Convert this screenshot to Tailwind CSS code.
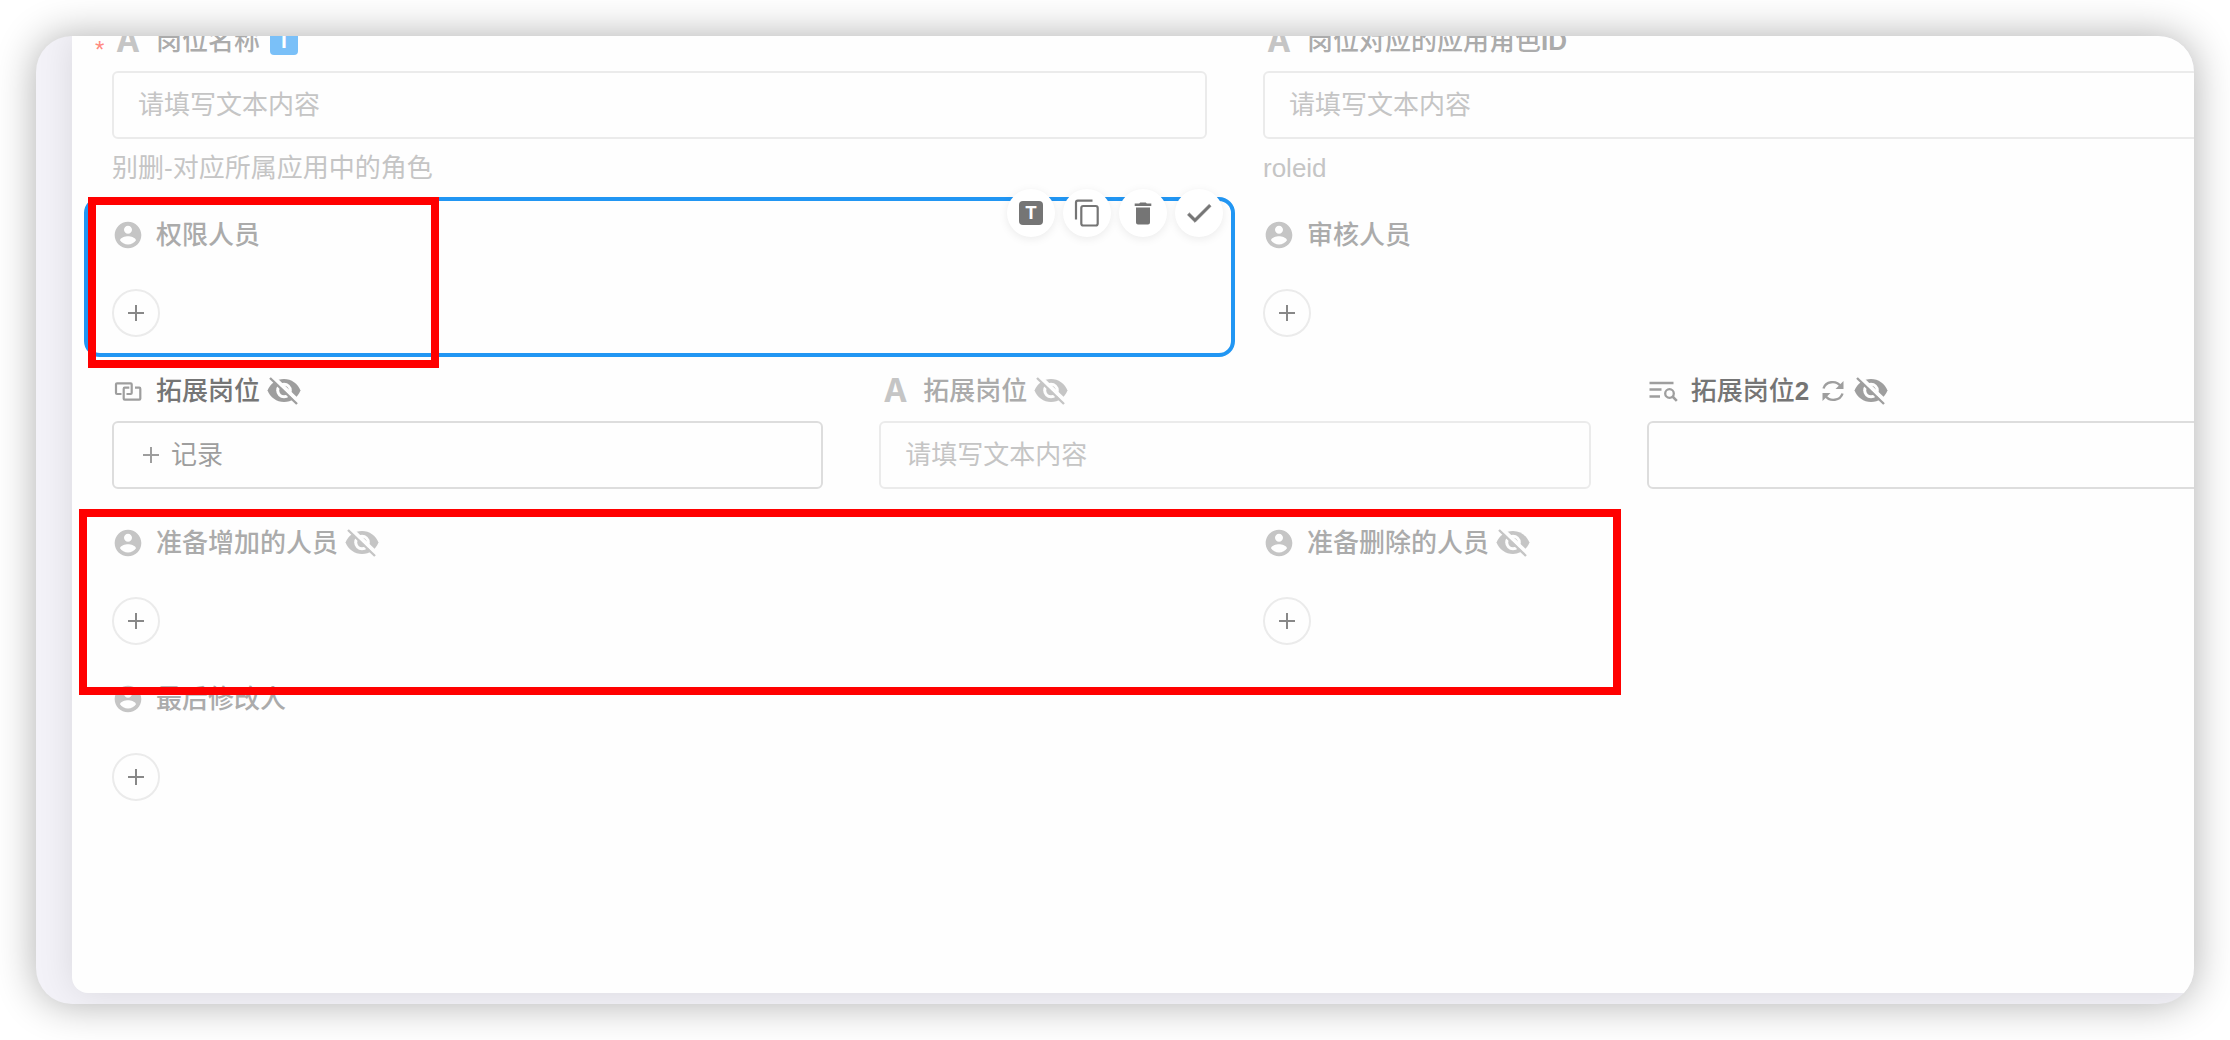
<!DOCTYPE html>
<html lang="zh-CN">
<head>
  <meta charset="UTF-8">
  <title>岗位表单</title>
  <meta name="viewport" content="width=device-width, initial-scale=1.0">
  <script src="https://cdn.jsdelivr.net/npm/@tailwindcss/browser@4"></script>
</head>
<body class="bg-white font-['Liberation_Sans','Noto_Sans_CJK_SC',sans-serif] text-[26px] leading-[36px]">

  <!-- icons -->
  <svg class="absolute size-0" aria-hidden="true">
    <symbol id="i-user" viewBox="0 0 24 24">
      <path d="M12 2C6.480 2 2 6.480 2 12s4.480 10 10 10 10-4.480 10-10S17.520 2 12 2zm0 3c1.660 0 3 1.340 3 3s-1.340 3-3 3-3-1.340-3-3 1.340-3 3-3zm0 14.200c-2.500 0-4.710-1.280-6-3.220.030-1.990 4-3.080 6-3.080 1.990 0 5.970 1.090 6 3.080-1.290 1.940-3.500 3.220-6 3.220z"/>
    </symbol>
    <mask id="m-hidden" maskUnits="userSpaceOnUse" x="0" y="0" width="36" height="36">
      <rect width="36" height="36" fill="#fff"/>
      <circle cx="18" cy="17.500" r="7.800" fill="#000"/>
      <circle cx="18" cy="17.500" r="4.800" fill="#fff"/>
      <path d="M18 15a3 3 0 0 1 3 3" fill="none" stroke="#000" stroke-width="1.200"/>
      <path d="M5 2 33 29" stroke="#000" stroke-width="4"/>
    </mask>
    <symbol id="i-hidden" viewBox="0 0 36 36">
      <path mask="url(#m-hidden)" d="M18 6C10.500 6 4.300 10.700 1.500 17.500 4.300 24.300 10.500 29 18 29s13.700-4.700 16.500-11.500C31.700 10.700 25.500 6 18 6z"/>
      <path d="M4 5 31 31" fill="none" stroke="currentColor" stroke-width="2.400"/>
    </symbol>
    <symbol id="i-plus" viewBox="0 0 16 16">
      <path d="M8 0v16M0 8h16" fill="none" stroke="currentColor" stroke-width="2"/>
    </symbol>
    <symbol id="i-relation" viewBox="0 0 32 32">
      <path d="M9.500 19H5a1 1 0 0 1-1-1V9.300a1 1 0 0 1 1-1h13.700a1 1 0 0 1 1 1V18a1 1 0 0 1-1 1H14.500M17.300 12.700h-4.600a1 1 0 0 0-1 1v10a1 1 0 0 0 1 1h14.600a1 1 0 0 0 1-1v-10a1 1 0 0 0-1-1H23" fill="none" stroke="currentColor" stroke-width="2.200"/>
    </symbol>
    <symbol id="i-lookup" viewBox="0 0 32 32">
      <path d="M2.500 8h24M2.500 14.500h12M2.500 21.500h10.500" fill="none" stroke="currentColor" stroke-width="2.400"/>
      <circle cx="22.500" cy="18.500" r="4.300" fill="none" stroke="currentColor" stroke-width="2.300"/>
      <path d="m25.500 21.500 4.300 4.300" fill="none" stroke="currentColor" stroke-width="2.600"/>
    </symbol>
    <symbol id="i-sync" viewBox="0 0 24 24">
      <path d="M2.500 9.500C4.500 2.500 15 .5 20 7.500M21.500 14.500C19.500 21.500 9 23.500 4 16.500" fill="none" stroke="currentColor" stroke-width="2.400"/>
      <path d="M22.500 2v8h-8zM1.500 22v-8h8z"/>
    </symbol>
    <symbol id="i-copy" viewBox="0 0 28 28">
      <path d="M3 20.500V3.500A1.800 1.800 0 0 1 4.800 1.700H19.500" fill="none" stroke="currentColor" stroke-width="2.200"/>
      <rect x="8.300" y="7" width="16.400" height="19.500" rx="2" fill="none" stroke="currentColor" stroke-width="2.200"/>
    </symbol>
    <symbol id="i-trash" viewBox="0 0 28 28">
      <path d="M7 8.500h14V23.500a2 2 0 0 1-2 2H9a2 2 0 0 1-2-2zM5.700 4.500h4.500l1-1h5.600l1 1h4.500v2.400H5.700z"/>
    </symbol>
    <symbol id="i-check" viewBox="0 0 24 24">
      <path d="M9 16.170 4.830 12l-1.420 1.410L9 19 21 7l-1.410-1.410z" stroke="currentColor" stroke-width=".6"/>
    </symbol>
  </svg>

  <main class="flex min-h-screen p-9">
    <div class="flex flex-1 overflow-hidden rounded-[36px] bg-[#f3f2f8] pb-[11px] pl-9 shadow-[0_0_40px_rgba(0,0,0,0.32)]">
      <div class="flex-1 rounded-bl-2xl bg-[#fefefe] shadow-[0_0_36px_rgba(0,0,0,0.11)]">

        <form class="relative -mt-[31px] -mr-[190px] ml-[14px] grid grid-cols-6 gap-x-1">

          <!-- row 1 -->
          <div class="relative col-span-3 px-[26px] py-[18px]">
            <span class="absolute top-[29px] left-[9px] text-2xl text-[#ff8a80]">*</span>
            <div class="flex h-9 items-center text-[#ababab]">
              <span class="mr-3 w-8 text-center font-['Inter',sans-serif] text-[32px] font-bold text-[#c5c5c5]">A</span>
              <label for="post-name" class="font-medium">岗位名称</label>
              <span class="ml-2.5 flex size-7 items-center justify-center rounded bg-[#7ac0f8] font-['Inter',sans-serif] text-xl font-bold text-white">T</span>
            </div>
            <input id="post-name" type="text" placeholder="请填写文本内容" class="mt-3 h-[68px] w-full rounded-md border-2 border-[#ebebeb] px-6 placeholder:text-[#c5c5c5]">
            <p class="mt-4 leading-[26px] text-[#c5c5c5]">别删-对应所属应用中的角色</p>
          </div>
          <div class="col-span-3 px-[26px] py-[18px]">
            <div class="flex h-9 items-center text-[#ababab]">
              <span class="mr-3 w-8 text-center font-['Inter',sans-serif] text-[32px] font-bold text-[#c5c5c5]">A</span>
              <label for="role-id" class="font-medium">岗位对应的应用角色<b>ID</b></label>
            </div>
            <input id="role-id" type="text" placeholder="请填写文本内容" class="mt-3 h-[68px] w-full rounded-md border-2 border-[#ebebeb] px-6 placeholder:text-[#c5c5c5]">
            <p class="mt-4 leading-[26px] text-[#c5c5c5]">roleid</p>
          </div>

          <!-- row 2, first field is selected -->
          <div class="relative col-span-3 rounded-[14px] px-[26px] py-[18px] outline-4 -outline-offset-2 outline-[#2196f3]">
            <div class="flex h-9 items-center text-[#ababab]">
              <svg class="mr-3 size-8 fill-[#c5c5c5]"><use href="#i-user"/></svg>
              <span id="l-auth" class="font-medium">权限人员</span>
            </div>
            <button type="button" aria-labelledby="l-auth" class="mt-9 flex size-12 items-center justify-center rounded-full border-2 border-[#ebebeb] text-[#888]">
              <svg class="size-4"><use href="#i-plus"/></svg>
            </button>
            <div class="absolute -top-2.5 right-2.5 flex gap-2 text-[#757575]">
              <button type="button" aria-label="标题" class="flex size-12 items-center justify-center rounded-full bg-white shadow-[0_2px_10px_rgba(0,0,0,0.08)]">
                <span class="flex size-6 items-center justify-center rounded bg-[#757575] font-['Inter',sans-serif] text-lg font-bold text-white">T</span>
              </button>
              <button type="button" aria-label="复制" class="flex size-12 items-center justify-center rounded-full bg-white shadow-[0_2px_10px_rgba(0,0,0,0.08)]">
                <svg class="size-7"><use href="#i-copy"/></svg>
              </button>
              <button type="button" aria-label="删除" class="flex size-12 items-center justify-center rounded-full bg-white shadow-[0_2px_10px_rgba(0,0,0,0.08)]">
                <svg class="size-7 fill-current"><use href="#i-trash"/></svg>
              </button>
              <button type="button" aria-label="确定" class="flex size-12 items-center justify-center rounded-full bg-white shadow-[0_2px_10px_rgba(0,0,0,0.08)]">
                <svg class="size-8 fill-current"><use href="#i-check"/></svg>
              </button>
            </div>
          </div>
          <div class="col-span-3 px-[26px] py-[18px]">
            <div class="flex h-9 items-center text-[#ababab]">
              <svg class="mr-3 size-8 fill-[#c5c5c5]"><use href="#i-user"/></svg>
              <span id="l-audit" class="font-medium">审核人员</span>
            </div>
            <button type="button" aria-labelledby="l-audit" class="mt-9 flex size-12 items-center justify-center rounded-full border-2 border-[#ebebeb] text-[#888]">
              <svg class="size-4"><use href="#i-plus"/></svg>
            </button>
          </div>

          <!-- row 3 -->
          <div class="col-span-2 px-[26px] py-[18px]">
            <div class="flex h-9 items-center text-[#757575]">
              <svg class="mr-3 size-8 text-[#9e9e9e]"><use href="#i-relation"/></svg>
              <span class="font-medium">拓展岗位</span>
              <svg class="ml-1.5 size-9 fill-current text-[#9e9e9e]"><use href="#i-hidden"/></svg>
            </div>
            <button type="button" class="mt-3 flex h-[68px] w-full items-center gap-3 rounded-md border-2 border-[#ddd] px-[29px] text-[#9e9e9e]">
              <svg class="size-4"><use href="#i-plus"/></svg>
              记录
            </button>
          </div>
          <div class="col-span-2 px-[26px] py-[18px]">
            <div class="flex h-9 items-center text-[#ababab]">
              <span class="mr-3 w-8 text-center font-['Inter',sans-serif] text-[32px] font-bold text-[#c5c5c5]">A</span>
              <label for="post-ext" class="font-medium">拓展岗位</label>
              <svg class="ml-1.5 size-9 fill-current text-[#c5c5c5]"><use href="#i-hidden"/></svg>
            </div>
            <input id="post-ext" type="text" placeholder="请填写文本内容" class="mt-3 h-[68px] w-full rounded-md border-2 border-[#ebebeb] px-6 placeholder:text-[#c5c5c5]">
          </div>
          <div class="col-span-2 px-[26px] py-[18px]">
            <div class="flex h-9 items-center text-[#757575]">
              <svg class="mr-3 size-8 text-[#9e9e9e]"><use href="#i-lookup"/></svg>
              <label for="post-ext2" class="font-medium">拓展岗位<b>2</b></label>
              <svg class="ml-3 size-6 fill-current text-[#9e9e9e]"><use href="#i-sync"/></svg>
              <svg class="ml-2 size-9 fill-current text-[#9e9e9e]"><use href="#i-hidden"/></svg>
            </div>
            <input id="post-ext2" type="text" class="mt-3 h-[68px] w-full rounded-md border-2 border-[#ddd] px-6">
          </div>

          <!-- row 4 -->
          <div class="col-span-3 px-[26px] py-[18px]">
            <div class="flex h-9 items-center text-[#ababab]">
              <svg class="mr-3 size-8 fill-[#c5c5c5]"><use href="#i-user"/></svg>
              <span id="l-add" class="font-medium">准备增加的人员</span>
              <svg class="ml-1.5 size-9 fill-current text-[#c5c5c5]"><use href="#i-hidden"/></svg>
            </div>
            <button type="button" aria-labelledby="l-add" class="mt-9 flex size-12 items-center justify-center rounded-full border-2 border-[#ebebeb] text-[#888]">
              <svg class="size-4"><use href="#i-plus"/></svg>
            </button>
          </div>
          <div class="col-span-3 px-[26px] py-[18px]">
            <div class="flex h-9 items-center text-[#ababab]">
              <svg class="mr-3 size-8 fill-[#c5c5c5]"><use href="#i-user"/></svg>
              <span id="l-del" class="font-medium">准备删除的人员</span>
              <svg class="ml-1.5 size-9 fill-current text-[#c5c5c5]"><use href="#i-hidden"/></svg>
            </div>
            <button type="button" aria-labelledby="l-del" class="mt-9 flex size-12 items-center justify-center rounded-full border-2 border-[#ebebeb] text-[#888]">
              <svg class="size-4"><use href="#i-plus"/></svg>
            </button>
          </div>

          <!-- row 5 -->
          <div class="col-span-3 px-[26px] py-[18px]">
            <div class="flex h-9 items-center text-[#ababab]">
              <svg class="mr-3 size-8 fill-[#c5c5c5]"><use href="#i-user"/></svg>
              <span id="l-mod" class="font-medium">最后修改人</span>
            </div>
            <button type="button" aria-labelledby="l-mod" class="mt-9 flex size-12 items-center justify-center rounded-full border-2 border-[#ebebeb] text-[#888]">
              <svg class="size-4"><use href="#i-plus"/></svg>
            </button>
          </div>

          <!-- red marks over the fields -->
          <div class="pointer-events-none absolute top-[192px] left-[2px] h-[171px] w-[351px] border-8 border-[#f00]"></div>
          <div class="pointer-events-none absolute top-[504px] -left-[7px] h-[186px] w-[1542px] border-8 border-[#f00]"></div>
        </form>

      </div>
    </div>
  </main>

</body>
</html>
